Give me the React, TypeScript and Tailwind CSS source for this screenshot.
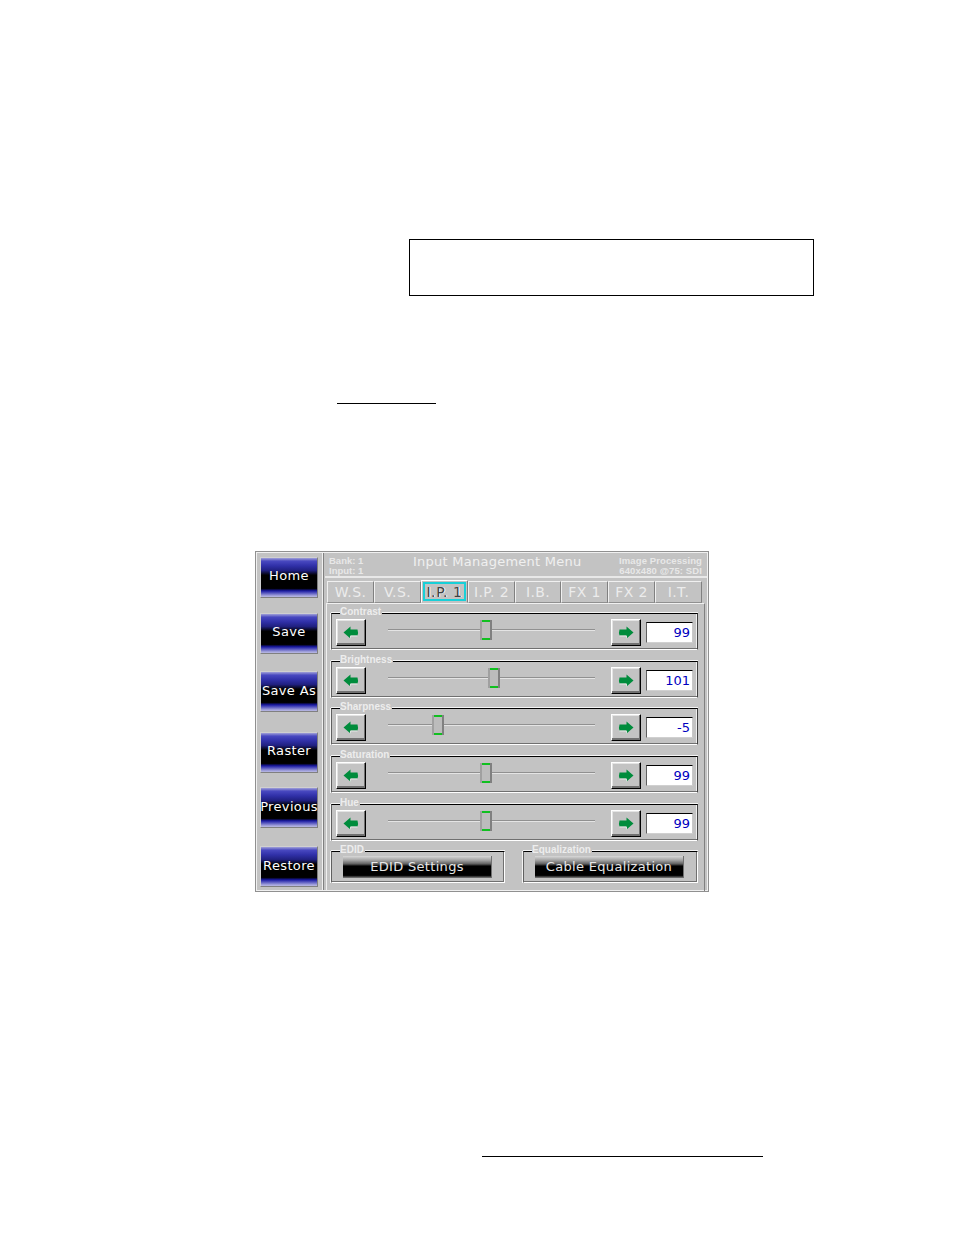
const sideButtons = [
  { label: 'Home', cls: 'mt-[5px] pb-[3px]' },
  { label: 'Save', cls: 'mt-[15px] pb-[3px]' },
  { label: 'Save As', cls: 'mt-[17px] pb-[1px]' },
  { label: 'Raster', cls: 'mt-[20px] pb-[3px]' },
  { label: 'Previous', cls: 'mt-[14px] pb-[1px]' },
  { label: 'Restore', cls: 'mt-[18px] pb-[1px]' },
];

const tabs = [
  { label: 'W.S.', cls: 'w-[47px]' },
  { label: 'V.S.', cls: 'w-[47px]' },
  { label: 'I.P. 1', cls: 'w-[47px]', active: true },
  { label: 'I.P. 2', cls: 'w-[47px]' },
  { label: 'I.B.', cls: 'w-[46px]' },
  { label: 'FX 1', cls: 'w-[47px]' },
  { label: 'FX 2', cls: 'w-[47px]' },
  { label: 'I.T.', cls: 'w-[47px]' },
];

const sliders = [
  { name: 'Contrast', value: '99', thumb: 92, mt: 'mt-[9px]' },
  { name: 'Brightness', value: '101', thumb: 100, mt: 'mt-[11px]' },
  { name: 'Sharpness', value: '-5', thumb: 44, mt: 'mt-[10px]' },
  { name: 'Saturation', value: '99', thumb: 92, mt: 'mt-[11px]' },
  { name: 'Hue', value: '99', thumb: 92, mt: 'mt-[11px]' },
];

const groupCls =
  'relative h-[32px] border border-t-black border-l-[#606060] border-r-white border-b-white pl-[11px] pt-[4px] shadow-[0_-1px_0_#f4f4f4,-1px_0_0_#f4f4f4,inset_0_-1px_0_#707070,inset_-1px_0_0_#707070]';

function Arrow({ right }: { right?: boolean }) {
  return (
    <svg width="16" height="13" viewBox="0 0 16 13" className={right ? '' : '-scale-x-100'} aria-hidden>
      <path d="M1.5 3.5H8.5V0.5L15.5 6.5L8.5 12.5V9.5H1.5Q0.5 6.5 1.5 3.5Z" fill="#008c3c" />
      <path d="M1.5 10H8.5V12.5" fill="none" stroke="#f0f0f0" strokeWidth="0.8" />
    </svg>
  );
}

function ArrowButton({ right }: { right?: boolean }) {
  return (
    <div className="w-[30px] h-[27px] flex items-center justify-center bg-[#c3c3c3] border border-t-white border-l-white border-r-black border-b-black shadow-[inset_-1px_-2px_0_#707070,inset_1px_1px_0_#e4e4e4]">
      <Arrow right={right} />
    </div>
  );
}

function Legend({ children }: { children: string }) {
  return (
    <span className="absolute left-[8px] top-[-8px] bg-[#c3c3c3] pr-[1px] font-['Liberation_Sans',sans-serif] text-[10px] leading-[12px] font-bold text-[#ededed]">
      {children}
    </span>
  );
}

function SliderRow({ name, value, thumb, mt }: (typeof sliders)[number]) {
  return (
    <div className={`relative ${mt} h-[37px] w-[367px] border border-t-black border-l-[#606060] border-r-[#404040] border-b-white shadow-[0_-1px_0_#f4f4f4,-1px_0_0_#f4f4f4,inset_0_-1px_0_#707070,inset_-1px_0_0_#f0f0f0] flex items-center pl-[4px]`}>
      <Legend>{name}</Legend>
      <div className="mt-[1px]">
        <ArrowButton />
      </div>
      <div className="relative w-[207px] ml-[22px] h-[26px] -mt-[3px] flex items-center">
        <div className="w-full h-[2px] bg-[#e4e4e4] border-t border-[#909090]" />
        {/* thumb offset is per-row data */}
        <div
          className="absolute top-[3px] w-[12px] h-[20px] bg-[#bcbcbc] border-x-2 border-l-[#a0a0a0] border-r-[#808080] shadow-[inset_0_2px_0_#10c020,inset_0_-2px_0_#10c020]"
          style={{ left: thumb }}
        />
      </div>
      <div className="ml-[16px] mt-[1px]">
        <ArrowButton right />
      </div>
      <div className="ml-[5px] mt-[2px] w-[47px] h-[21px] bg-white border border-t-black border-l-[#606060] border-r-[#c8c8c8] border-b-[#d0d0d0] flex items-center justify-end pr-[2px] text-[13px] text-[#0000c0]">
        {value}
      </div>
    </div>
  );
}

function BlackButton({ label, cls }: { label: string; cls: string }) {
  return (
    <div className={`${cls} h-[22px] flex items-center justify-center pb-[1px] text-[13px] tracking-[0.32px] text-[#e8e8e8] bg-[linear-gradient(#d8d8d8_0%,#a0a0a0_20%,#606060_36%,#000000_46%,#000000_88%,#808080_100%)] border-r border-[#707070]`}>
      {label}
    </div>
  );
}

export default function App() {
  return (
    <div className="w-[954px] h-[1235px] bg-white font-['DejaVu_Sans','Liberation_Sans',sans-serif] overflow-hidden">
      <div className="ml-[409px] pt-[239px]">
        <div className="w-[405px] h-[57px] border border-black" />
      </div>
      <div className="ml-[337px] mt-[107px] w-[99px] h-px bg-black" />

      <div className="ml-[255px] mt-[147px] w-[454px] h-[341px] bg-[#c3c3c3] border border-[#909090] shadow-[inset_1px_1px_0_#f0f0f0,inset_-1px_-1px_0_#f0f0f0] flex">
        {/* side nav */}
        <div className="w-[66px] shrink-0 pl-[4px] flex flex-col">
          {sideButtons.map(b => (
            <div
              key={b.label}
              className={`${b.cls} h-[41px] w-[58px] flex items-center justify-center whitespace-nowrap text-[13px] tracking-[0.35px] text-white border border-[#808080] border-t-[#d0d0d0] border-l-[#d0d0d0] bg-[linear-gradient(#a0a0d8_0%,#4848c0_8%,#3030a8_20%,#202080_32%,#000000_44%,#000000_78%,#1818a0_84%,#5858c0_90%,#b0b0e0_98%)]`}
            >
              {b.label}
            </div>
          ))}
        </div>
        <div className="w-[2px] my-[1px] shrink-0 bg-[#808080] border-l border-[#f0f0f0]" />

        <div className="flex-1 min-w-0 flex flex-col">
          {/* header */}
          <div className="h-[26px] mx-[1px] shrink-0 border-b-2 border-[#e8e8e8] flex items-start pl-[4px] pr-[5px] pt-[4px] text-[#e8e8e8]">
            <div className="w-[84px] font-['Liberation_Sans',sans-serif] text-[9.5px] leading-[10px] font-bold">
              <div>Bank: 1</div>
              <div>Input: 1</div>
            </div>
            <div className="w-[168px] -mt-[2px] text-center whitespace-nowrap text-[13px] leading-[15px] tracking-[0.25px] text-[#f0f0f0]">
              Input Management Menu
            </div>
            <div className="flex-1 text-right whitespace-nowrap font-['Liberation_Sans',sans-serif] text-[9.5px] leading-[10px] font-bold tracking-[0.1px]">
              <div>Image Processing</div>
              <div>640x480 @75: SDI</div>
            </div>
          </div>

          {/* tabs */}
          <div className="h-[22px] mt-[3px] ml-[3px] flex shrink-0">
            {tabs.map(t => (
              <div
                key={t.label}
                className={
                  t.active
                    ? `${t.cls} -mt-[1px] h-[23px] shrink-0 border border-t-white border-l-white border-r-[#808080] border-b-[#c3c3c3] p-[1px]`
                    : `${t.cls} h-[22px] shrink-0 flex items-center justify-center border border-t-[#f0f0f0] border-l-[#f0f0f0] border-r-[#808080] border-b-[#909090] text-[14px] tracking-[0.4px] text-[#ececec]`
                }
              >
                {t.active ? (
                  <div className="h-full pt-[1px] border-2 border-[#18d0d8] flex items-center justify-center whitespace-nowrap text-[14px] tracking-[0.6px] text-[#404040] [text-shadow:1px_0_0_#ffffff]">
                    {t.label}
                  </div>
                ) : (
                  t.label
                )}
              </div>
            ))}
          </div>

          {/* body */}
          <div className="ml-[2px] mr-[3px] flex-1 border-l border-t border-r border-t-[#f0f0f0] border-l-[#f0f0f0] border-r-[#808080] pl-[4px]">
            {sliders.map(s => (
              <SliderRow key={s.name} {...s} />
            ))}
            <div className="flex mt-[10px]">
              <div className={`${groupCls} w-[174px]`}>
                <Legend>EDID</Legend>
                <BlackButton label="EDID Settings" cls="w-[149px]" />
              </div>
              <div className={`${groupCls} ml-[18px] w-[175px]`}>
                <Legend>Equalization</Legend>
                <BlackButton label="Cable Equalization" cls="w-[149px]" />
              </div>
            </div>
          </div>
        </div>
      </div>

      <div className="ml-[482px] mt-[264px] w-[281px] h-px bg-black" />
    </div>
  );
}
